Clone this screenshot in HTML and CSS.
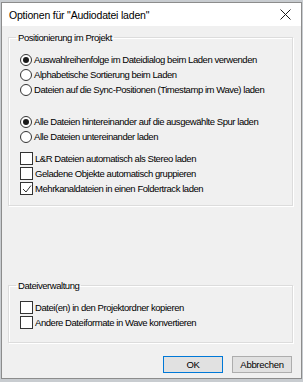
FILE: index.html
```html
<!DOCTYPE html>
<html lang="de">
<head>
  <meta charset="UTF-8" />
  <title>Optionen für "Audiodatei laden"</title>
  <link rel="stylesheet" href="styles.css">
</head>
<body>

  <div class="dialog">
    <div class="titlebar">
      <span class="title">Optionen für "Audiodatei laden"</span>
      <svg class="close" width="11" height="11" viewBox="0 0 11 11">
        <path d="M0.5 0.5 L10.5 10.5 M10.5 0.5 L0.5 10.5" stroke="#1a1a1a" stroke-width="1" fill="none"/>
      </svg>
    </div>

    <div class="content">
      <fieldset class="group group-position">
        <legend>Positionierung im Projekt</legend>

        <div class="options">
          <label class="option"><span class="radio checked"></span>Auswahlreihenfolge im Dateidialog beim Laden verwenden</label>
          <label class="option"><span class="radio"></span>Alphabetische Sortierung beim Laden</label>
          <label class="option"><span class="radio"></span>Dateien auf die Sync-Positionen (Timestamp im Wave) laden</label>
        </div>

        <div class="options spaced-lg">
          <label class="option"><span class="radio checked"></span>Alle Dateien hintereinander auf die ausgewählte Spur laden</label>
          <label class="option"><span class="radio"></span>Alle Dateien untereinander laden</label>
        </div>

        <div class="options spaced-sm">
          <label class="option"><span class="check"></span>L&amp;R Dateien automatisch als Stereo laden</label>
          <label class="option"><span class="check"></span>Geladene Objekte automatisch gruppieren</label>
          <label class="option">
            <span class="check">
              <svg width="10" height="10" viewBox="0 0 10 10"><path d="M1 5 L4 8 L9 1.5" stroke="#333" stroke-width="1" fill="none"/></svg>
            </span>Mehrkanaldateien in einen Foldertrack laden
          </label>
        </div>
      </fieldset>

      <fieldset class="group group-files">
        <legend>Dateiverwaltung</legend>
        <div class="options">
          <label class="option"><span class="check"></span>Datei(en) in den Projektordner kopieren</label>
          <label class="option"><span class="check"></span>Andere Dateiformate in Wave konvertieren</label>
        </div>
      </fieldset>

      <div class="buttons">
        <button class="btn btn-default">OK</button>
        <button class="btn">Abbrechen</button>
      </div>
    </div>
  </div>

</body>
</html>
```

FILE: styles.css
```css
html, body {
  margin: 0;
  padding: 0;
  background-color: #c8ccd0;
  font-family: 'Liberation Sans', Arial, sans-serif;
  font-size: 9.5px;
  letter-spacing: -0.45px;
  color: #000;
}

body {
  padding: 2px 1px 0 1px;
}

.dialog {
  width: 299px;
  height: 375px;
  border: 1px solid #8c8c8c;
  background-color: #f0f0f0;
  display: flex;
  flex-direction: column;
}

.titlebar {
  height: 23px;
  background-color: #fff;
  display: flex;
  align-items: center;
  justify-content: space-between;
  padding: 0 10px 0 7px;
}

.title {
  font-size: 10.5px;
  letter-spacing: -0.2px;
}

.content {
  flex: 1;
  display: flex;
  flex-direction: column;
  padding: 6px 8px 0 6px;
}

.group {
  margin: 0;
  min-width: 0;
  padding: 9px 0 0 11px;
  border: 1px solid #dcdcdc;
  box-shadow: 1px 1px 0 #fff inset, 1px 1px 0 #fff;
}

.group legend {
  padding: 0 2px;
  margin-left: -4px;
}

.group-position {
  height: 163px;
}

.group-files {
  margin-top: 74px;
  height: 52px;
  padding-top: 9px;
}

.options {
  display: flex;
  flex-direction: column;
}

.spaced-lg {
  margin-top: 17px;
}

.spaced-sm {
  margin-top: 7px;
}

.option {
  display: flex;
  align-items: center;
  height: 15px;
  white-space: nowrap;
}

.radio {
  width: 10px;
  height: 10px;
  border: 1px solid #333;
  border-radius: 50%;
  background-color: #fff;
  margin-right: 2px;
  display: flex;
  align-items: center;
  justify-content: center;
  flex: none;
}

.radio.checked::after {
  content: "";
  width: 6px;
  height: 6px;
  border-radius: 50%;
  background-color: #1a1a1a;
}

.check {
  width: 11px;
  height: 11px;
  border: 1px solid #333;
  background-color: #fff;
  margin-right: 2px;
  display: flex;
  align-items: center;
  justify-content: center;
  flex: none;
}

.buttons {
  display: flex;
  justify-content: flex-end;
  gap: 9px;
  margin-top: 13px;
  padding-right: 1px;
}

.btn {
  width: 60px;
  height: 17px;
  padding: 0;
  font-family: inherit;
  font-size: 9.5px;
  letter-spacing: -0.3px;
  background-color: #e1e1e1;
  border: 1px solid #adadad;
  color: #000;
}

.btn-default {
  border: 1px solid #0078d7;
}
```
